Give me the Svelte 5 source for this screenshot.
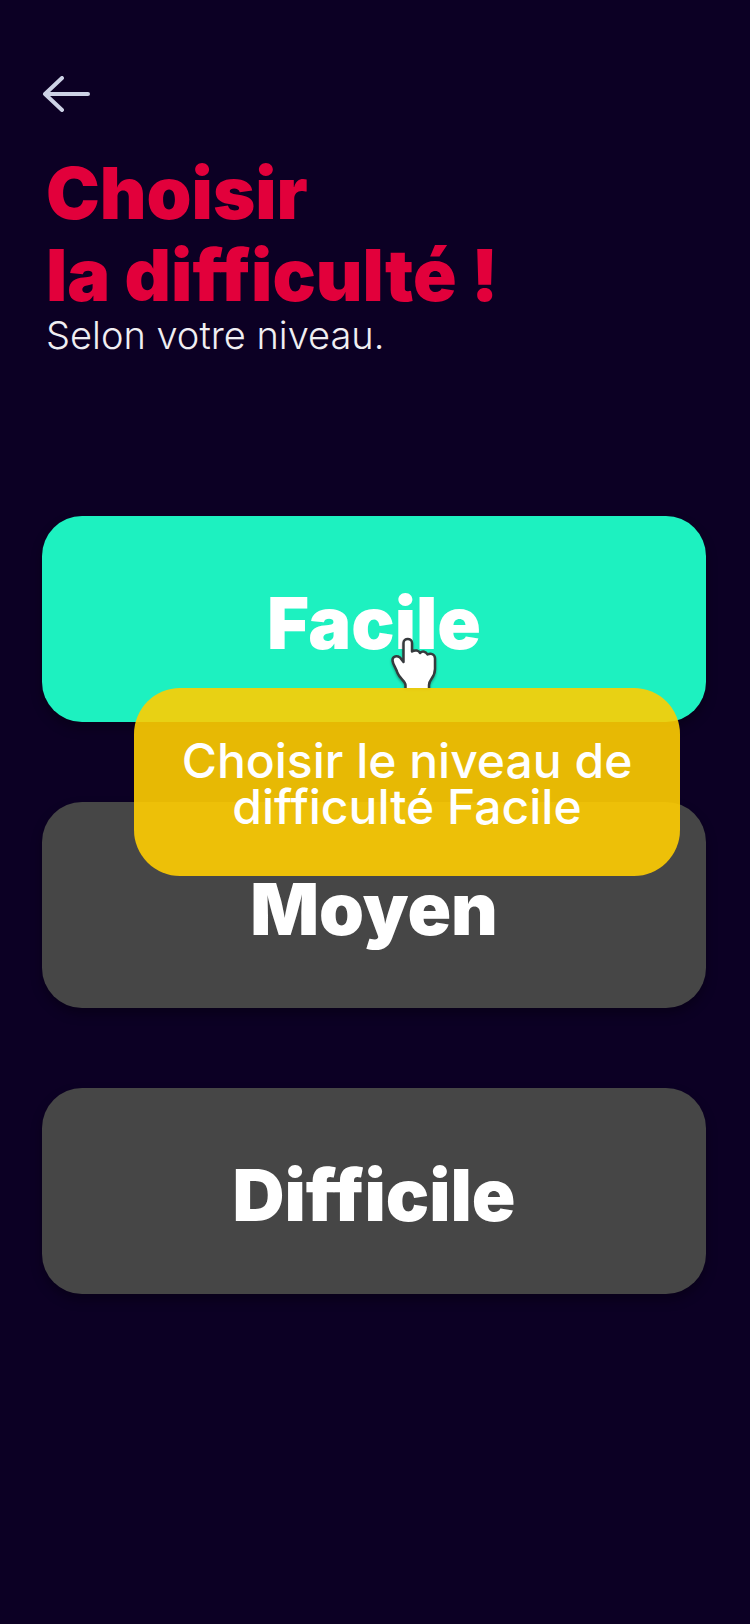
<script lang="ts">
  const levels = ['Facile', 'Moyen', 'Difficile'];
  let active = $state('Facile');
</script>

<main>
  <button class="back" aria-label="Retour">
    <svg width="48" height="36" viewBox="0 0 48 36" fill="none" aria-hidden="true">
      <path d="M46 18H3M20 2L3 18L20 34" stroke="#cdd2e5" stroke-width="4" stroke-linecap="round" stroke-linejoin="round" />
    </svg>
  </button>

  <header>
    <h1>Choisir<br />la difficulté !</h1>
    <p>Selon votre niveau.</p>
  </header>

  <div class="levels">
    {#each levels as level}
      <div class="slot" class:open={active === level}>
        <button class="level" class:active={active === level} onclick={() => (active = level)}>{level}</button>
        {#if active === level}
          <svg class="hand" width="46" height="54" viewBox="0 0 46 54" aria-hidden="true">
            <path
              d="M14.500 51V48C14.500 44 9 42 6.500 36C5 31 1.500 27 1.500 23C1.500 19 6 18.500 9 20.500L12.500 25V6C12.500 0.500 21 0.500 21 6V14.500C24 12.500 28 13.500 29 16C31.500 13.500 35 14.500 36.500 17.500C40 15.500 44 17.500 44 21.500V32C44 41 38 42 38 48V51"
              fill="#fff"
              stroke="#363a3d"
              stroke-width="2.500"
              stroke-linejoin="round"
            />
          </svg>
          <div class="tooltip" role="tooltip">Choisir le niveau de<br />difficulté {level}</div>
        {/if}
      </div>
    {/each}
  </div>
</main>

<style>
  :global(body) {
    background: #0c0024;
  }

  main {
    box-sizing: border-box;
    min-height: 100vh;
    padding: 76px 44px 80px 42px;
    font-family: Inter, 'Open Sans', sans-serif;
    color: #fff;
  }

  button {
    border: 0;
    padding: 0;
    font: inherit;
    color: inherit;
    cursor: pointer;
  }

  .back {
    display: block;
    background: none;
  }

  .back svg {
    display: block;
  }

  header {
    padding: 40px 0 0 4px;
  }

  h1 {
    margin: 0;
    font-size: 72px;
    line-height: 82px;
    font-weight: 900;
    color: #e2003b;
  }

  p {
    margin: 0;
    font-size: 38px;
    line-height: 38px;
    font-weight: 300;
    color: #f0eef2;
  }

  .levels {
    display: flex;
    flex-direction: column;
    gap: 80px;
    margin-top: 162px;
  }

  .slot {
    position: relative;
  }

  .open {
    z-index: 1;
  }

  .level {
    display: block;
    box-sizing: border-box;
    width: 100%;
    height: 206px;
    padding-top: 6px;
    border-radius: 40px;
    background: #464646;
    box-shadow: 0 6px 12px rgba(0, 0, 0, 0.3);
    font-size: 72px;
    font-weight: 900;
  }

  .active {
    background: #1df1c0;
  }

  .hand {
    position: absolute;
    top: 121px;
    left: 349px;
    filter: drop-shadow(0 2px 1px rgba(0, 0, 0, 0.3));
  }

  .tooltip {
    position: absolute;
    top: 172px;
    left: 92px;
    right: 26px;
    padding: 50px 0 46px;
    border-radius: 46px;
    background: rgba(255, 205, 1, 0.9);
    font-size: 48px;
    line-height: 46px;
    font-weight: 500;
    text-align: center;
  }
</style>
